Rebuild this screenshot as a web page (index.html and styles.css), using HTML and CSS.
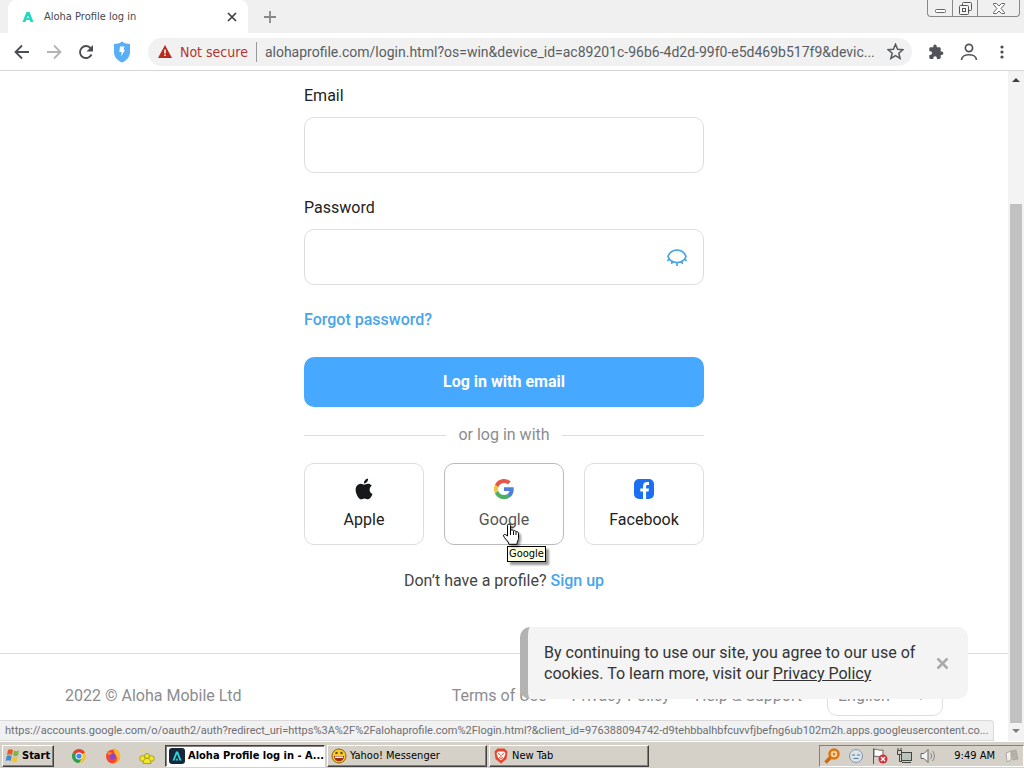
FILE: index.html
```html
<!DOCTYPE html>
<html lang="en">
<head>
    <meta charset="UTF-8">
    <meta name="viewport" content="width=device-width, initial-scale=1.0">
    <title>Aloha Profile log in</title>
    <link rel="stylesheet" href="styles.css">
</head>
<body>
    <header class="browser">
        <div class="tab-strip">
            <div class="tab">
                <svg class="tab-icon" width="12" height="12" viewBox="0 0 12 12"><path d="M0.500 11 L4.500 1 H7.500 L11.500 11 H8.500 L6 4.500 L3.500 11z" fill="#1fd8c0"/><path d="M3.500 9 L6 6.500 L8.500 9z" fill="#1fd8c0"/></svg>
                <span class="tab-title">Aloha Profile log in</span>
                <button class="icon-btn" aria-label="Close tab"><svg width="10" height="10" viewBox="0 0 10 10"><path d="M1 1l8 8M9 1l-8 8" stroke="#3c4043" stroke-width="1.700"/></svg></button>
            </div>
            <button class="icon-btn new-tab" aria-label="Open new tab"><svg width="12" height="12" viewBox="0 0 12 12"><path d="M6 0v12M0 6h12" stroke="#888" stroke-width="1.800"/></svg></button>
            <div class="window-buttons">
                <button class="win-btn" aria-label="Minimize"><svg width="13" height="12" viewBox="0 0 13 12"><rect x="1.500" y="7.500" width="10" height="3" rx="1" fill="#fff" stroke="#666"/></svg></button>
                <button class="win-btn" aria-label="Restore"><svg width="13" height="13" viewBox="0 0 13 13" fill="#f4f4f4" stroke="#555"><rect x="3.500" y="0.500" width="9" height="8" rx="1"/><rect x="0.500" y="3.500" width="9" height="9" rx="1"/><rect x="3.500" y="6.500" width="3" height="3"/></svg></button>
                <button class="win-btn win-close" aria-label="Close"><svg width="12" height="11" viewBox="0 0 12 11"><path d="M.5.5h3L6 3 8.500.5h3v1L8 5.500l3.500 4v1h-3L6 8l-2.500 2.500h-3v-1L4 5.500.5 1.500z" fill="#fff" stroke="#666"/></svg></button>
            </div>
        </div>
        <div class="toolbar">
            <button class="icon-btn" aria-label="Back"><svg width="16" height="16" viewBox="0 0 16 16"><path d="M15 8H2M8 1.500L1.500 8 8 14.500" fill="none" stroke="#4a4d51" stroke-width="1.800"/></svg></button>
            <button class="icon-btn" aria-label="Forward"><svg width="16" height="16" viewBox="0 0 16 16"><path d="M1 8h13M8 1.500L14.500 8 8 14.500" fill="none" stroke="#b4b4b4" stroke-width="1.800"/></svg></button>
            <button class="icon-btn" aria-label="Reload"><svg width="16" height="16" viewBox="0 0 16 16"><path d="M13.500 10.500a6 6 0 1 1-.8-6.200" fill="none" stroke="#4a4d51" stroke-width="1.900"/><path d="M15 1v6.500H8.500z" fill="#4a4d51"/></svg></button>
            <button class="icon-btn shield" aria-label="Shields"><svg width="18" height="22" viewBox="0 0 18 22"><path d="M9 0.500C6.500 2.300 4 3 1 3v8c0 5 3.500 8.500 8 10.500 4.500-2 8-5.500 8-10.500V3c-3 0-5.500-.7-8-2.500z" fill="#58aff5"/><path d="M7 5.500h4.500l-1 3.500H12l-4 6.500.8-4.500H6.300z" fill="#fff"/></svg></button>
            <div class="address">
                <svg width="14" height="13" viewBox="0 0 14 13"><path d="M7 0l7 13H0z" fill="#b72a20"/><path d="M7 4.500v4M7 9.500v1.500" stroke="#fff" stroke-width="1.500"/></svg>
                <span class="not-secure">Not secure</span>
                <input class="url" type="text" aria-label="Address" value="alohaprofile.com/login.html?os=win&amp;device_id=ac89201c-96b6-4d2d-99f0-e5d469b517f9&amp;devic...">
                <button class="icon-btn" aria-label="Bookmark"><svg width="17" height="17" viewBox="0 0 17 17"><path d="M8.500 1.300l2.100 5 5.200.4-4 3.500 1.300 5.200-4.600-2.800-4.600 2.800 1.300-5.200-4-3.500 5.200-.4z" fill="none" stroke="#56595d" stroke-width="1.500"/></svg></button>
            </div>
            <button class="icon-btn" aria-label="Extensions"><svg width="16" height="16" viewBox="0 0 16 16"><path d="M13.700 7.500h-1V4.700c0-.8-.6-1.400-1.400-1.400H8.700v-1a1.700 1.700 0 0 0-3.400 0v1H2.600c-.8 0-1.300.6-1.300 1.400v2.600h1a1.800 1.800 0 0 1 0 3.600h-1v2.700c0 .8.5 1.400 1.300 1.400h2.700v-1a1.800 1.800 0 0 1 3.600 0v1h2.400c.8 0 1.400-.6 1.400-1.400v-2.700h1a1.700 1.700 0 0 0 0-3.400z" fill="#505357"/></svg></button>
            <button class="icon-btn" aria-label="Profile"><svg width="18" height="18" viewBox="0 0 18 18"><g fill="none" stroke="#505357" stroke-width="1.700"><circle cx="9" cy="5" r="3.600"/><path d="M1.500 17c.5-7 14.500-7 15 0"/></g></svg></button>
            <button class="icon-btn" aria-label="Menu"><svg width="16" height="14" viewBox="0 0 16 14" fill="#4a4d51"><circle cx="8" cy="2" r="1.600"/><circle cx="8" cy="7" r="1.600"/><circle cx="8" cy="12" r="1.600"/></svg></button>
        </div>
    </header>

    <div class="viewport">
        <div class="page">
            <main class="content">
                <form class="login-form">
                    <label class="field-label" for="email">Email</label>
                    <div class="field"><input id="email" type="email"></div>
                    <label class="field-label" for="password">Password</label>
                    <div class="field">
                        <input id="password" type="password">
                        <button type="button" class="icon-btn" aria-label="Show password"><svg width="22" height="18" viewBox="0 0 22 18"><g fill="none" stroke="#4aa3e6" stroke-width="1.700"><path d="M2 8.500C5 0 17 0 20 8.500 17 16.500 5 16.500 2 8.500z"/><path d="M3.500 10.500l-2 2.500M6.500 13l-1 3M11 14v4M15.500 13l1 3M18.500 10.500l2 2.500"/></g></svg></button>
                    </div>
                    <a class="link forgot" href="#">Forgot password?</a>
                    <button type="button" class="submit">Log in with email</button>
                    <div class="divider">or log in with</div>
                    <div class="social">
                        <button type="button" class="social-btn">
                            <svg width="22" height="22" viewBox="2 2 20 20"><path fill="#15191b" d="M17.100 12.600c0-2.300 1.900-3.400 2-3.500-1.100-1.600-2.800-1.800-3.400-1.800-1.400-.2-2.800.8-3.500.8s-1.900-.8-3.100-.8c-1.600 0-3 .9-3.900 2.300-1.700 2.900-.4 7.100 1.200 9.400.8 1.200 1.700 2.400 3 2.400 1.200 0 1.600-.8 3.100-.8 1.400 0 1.800.8 3.100.8s2.100-1.200 2.900-2.300c.9-1.300 1.300-2.600 1.300-2.700-.1 0-2.700-1-2.700-3.800zM14.700 5.600c.7-.8 1.100-1.900 1-3.100-1 .1-2.100.7-2.800 1.500-.6.700-1.100 1.800-1 2.900 1.100.1 2.200-.5 2.800-1.300z"/></svg>
                            Apple
                        </button>
                        <button type="button" class="social-btn hovered">
                            <svg width="22" height="22" viewBox="0 0 24 24"><path fill="#4c7fe0" d="M22.600 12.300c0-.8-.1-1.500-.2-2.300H12v4.300h5.900c-.3 1.400-1 2.500-2.200 3.300v2.800h3.600c2.100-1.900 3.300-4.700 3.300-8.100z"/><path fill="#4caf63" d="M12 23c3 0 5.500-1 7.300-2.700l-3.600-2.800c-1 .7-2.200 1.100-3.700 1.100-2.900 0-5.300-1.900-6.200-4.500H2.200v2.800C4 20.500 7.700 23 12 23z"/><path fill="#f6c544" d="M5.800 14.100a6.600 6.600 0 0 1 0-4.200V7.100H2.200a11 11 0 0 0 0 9.800z"/><path fill="#e8564a" d="M12 5.400c1.600 0 3.100.6 4.200 1.600l3.200-3.100C17.500 2.100 15 1 12 1 7.700 1 4 3.500 2.200 7.100l3.600 2.800C6.700 7.300 9.100 5.400 12 5.400z"/></svg>
                            Google
                            <svg class="cursor" width="18" height="24" viewBox="0 0 18 24"><path d="M5.500 13V2.500a1.500 1.500 0 0 1 3 0V8c0-1.500 3-1.500 3 .5 0-1.500 2.500-1 2.500.8 0-1 2.500-.8 2.500 1v5c0 2-1.500 3-1.500 6H7c0-3-5-6-5.500-8.500-.3-1.300 1.500-2 2.500-.8z" fill="#fff" stroke="#000"/><path d="M8.500 8v4M11.500 8.500V12M14 9.500V12" stroke="#000"/></svg>
                            <span class="tooltip">Google</span>
                        </button>
                        <button type="button" class="social-btn">
                            <svg width="22" height="22" viewBox="0 0 22 22"><rect x="1" y="1" width="20" height="20" rx="5" fill="#1b6ff2"/><path d="M10 21v-7.500H7.300v-3H10V8.300c0-2.900 1.600-4.300 4-4.300h2v2.900h-1.200c-1.300 0-1.700.7-1.700 1.600v2H16l-.4 3h-2.500V21z" fill="#fff"/></svg>
                            Facebook
                        </button>
                    </div>
                    <p class="signup">Don’t have a profile? <a class="link" href="#">Sign up</a></p>
                </form>
            </main>
            <footer class="footer">
                <span>2022 © Aloha Mobile Ltd</span>
                <nav class="footer-links">
                    <a href="#">Terms of Use</a>
                    <a href="#">Privacy Policy</a>
                    <a href="#">Help &amp; Support</a>
                    <div class="language">
                        <select aria-label="Language"><option>English</option></select>
                        <svg width="10" height="10" viewBox="0 0 10 10"><path d="M1 4l4 4 4-4" fill="none" stroke="#8a8a8a" stroke-width="1.500"/></svg>
                    </div>
                </nav>
            </footer>
        </div>
        <div class="scrollbar">
            <svg width="16" height="16" viewBox="0 0 16 16"><path d="M4 11l4-4 4 4z" fill="#404040"/></svg>
            <div class="thumb"></div>
            <svg width="16" height="18" viewBox="0 0 16 18"><path d="M4 6l4 4 4-4z" fill="#808080"/></svg>
        </div>
        <aside class="cookies">
            <p>By continuing to use our site, you agree to our use of cookies. To learn more, visit our <a href="#">Privacy Policy</a></p>
            <button class="icon-btn" aria-label="Close"><svg width="13" height="13" viewBox="0 0 13 13"><path d="M1.500 1.500l10 10M11.500 1.500l-10 10" stroke="#aaa" stroke-width="2.500"/></svg></button>
        </aside>
        <div class="status">https://accounts.google.com/o/oauth2/auth?redirect_uri=https%3A%2F%2Falohaprofile.com%2Flogin.html?&amp;client_id=976388094742-d9tehbbalhbfcuvvfjbefng6ub102m2h.apps.googleusercontent.co...</div>
    </div>

    <footer class="taskbar">
        <button class="start">
            <svg width="16" height="16" viewBox="0 0 16 16"><path d="M3 2c2-1 3-1 5 0L7 7C5 6 4 6 2 7z" fill="#e2592a"/><path d="M9 2.500c2 1 3 1 5 0l-1 5c-2 1-3 1-5 0z" fill="#7ab843"/><path d="M1.700 8c2-1 3-1 5 0l-1 5c-2-1-3-1-5 0z" fill="#3e8dd0"/><path d="M7.700 8.500c2 1 3 1 5 0l-1 5c-2 1-3 1-5 0z" fill="#f4c432"/></svg>
            Start
        </button>
        <div class="quick-launch">
            <button class="icon-btn" aria-label="Chrome"><svg width="16" height="16" viewBox="0 0 16 16"><circle cx="8" cy="8" r="7" fill="#f4c531"/><path d="M8 8L2 4.400a7 7 0 0 1 12 0z" fill="#db4437"/><path d="M8 8L2 4.400A7 7 0 0 0 8 15l3-5z" fill="#2c9e58"/><circle cx="8" cy="8" r="3.500" fill="#fff"/><circle cx="8" cy="8" r="2.600" fill="#4285f4"/></svg></button>
            <button class="icon-btn" aria-label="Firefox"><svg width="16" height="16" viewBox="0 0 16 16"><circle cx="8" cy="8.500" r="7" fill="#f8452f"/><path d="M9 .5c5 1 6.500 4.500 6.200 8A7 7 0 0 1 8 15.500c4-2 5-5 3-8-1-2-3-4-2-7z" fill="#ffb52e"/><circle cx="7.500" cy="8.500" r="3" fill="#8a45c9"/><path d="M1.500 2.500c1 1.500 3 1.500 6 2.500L4 7.500z" fill="#ff8a2e"/></svg></button>
            <button class="icon-btn" aria-label="Messenger"><svg width="16" height="16" viewBox="0 0 16 16"><path d="M3 2l1.500 2M8 .5v2.500M13 2l-1.500 2" stroke="#f1dc4a"/><g fill="#f5e625" stroke="#97902a" stroke-width=".8"><circle cx="3.500" cy="10.500" r="2.800"/><circle cx="12.500" cy="10.500" r="2.800"/><path d="M4 15.500c0-7 8-7 8 0z"/><circle cx="8" cy="8" r="2.500"/></g></svg></button>
        </div>
        <button class="task active">
            <svg width="16" height="16" viewBox="0 0 16 16"><rect width="16" height="16" rx="3" fill="#17273a"/><path d="M3.500 12.500L7 3.500h2l3.500 9h-2L8 6l-2.500 6.500z" fill="#25d9dc"/><path d="M6.500 12.500L8 10l1.500 2.500z" fill="#25d9dc"/></svg>
            <span>Aloha Profile log in - A...</span>
        </button>
        <button class="task">
            <svg width="16" height="16" viewBox="0 0 16 16"><circle cx="8" cy="8" r="7" fill="#f8cc25" stroke="#8f6410"/><path d="M3 8h10c0 7-10 7-10 0z" fill="#a52b18"/><path d="M4 8.500h8v1.500H4z" fill="#fff"/><path d="M4.500 5.500l2-1M11.500 5.500l-2-1" stroke="#4a3208" stroke-width="1.400"/></svg>
            <span>Yahoo! Messenger</span>
        </button>
        <button class="task">
            <svg width="16" height="16" viewBox="0 0 16 16"><path d="M4.500.5h7L14.500 3.500l-1 7.500L8 15.500 2.500 11l-1-7.500z" fill="#e8452c"/><path d="M5 3.500h6l1.500 2-1.500 4-3 3-3-3-1.500-4z" fill="#fff"/><path d="M5 5.500l2 1M11 5.500l-2 1M8 6.500V9M6 9.500l2 1 2-1" stroke="#e8452c" fill="none"/></svg>
            <span>New Tab</span>
        </button>
        <div class="tray">
            <svg width="16" height="16" viewBox="0 0 16 16"><path d="M1.500 14.500L7 9" stroke="#cf6a0a" stroke-width="3.500"/><circle cx="10" cy="6" r="4.500" fill="#f4d3a5" stroke="#df7510" stroke-width="2.500"/><circle cx="10" cy="6" r="1.200" fill="#df7510"/></svg>
            <svg width="16" height="16" viewBox="0 0 16 16"><circle cx="8" cy="8" r="6.500" fill="#d9e4ec" stroke="#8498a8"/><path d="M4 7h3M9 7h3M5.500 10.500h5" stroke="#5d7488" fill="none"/></svg>
            <svg width="16" height="16" viewBox="0 0 16 16"><path d="M1.500 16V.5" stroke="#555"/><path d="M2 1.500c3-1 4 1.500 9 .5v6.500c-4 1-6-1-9 0z" fill="#fff" stroke="#666"/><circle cx="11" cy="11" r="4.500" fill="#d0333a"/><path d="M9 9l4 4M13 9l-4 4" stroke="#fff" stroke-width="1.400"/></svg>
            <svg width="16" height="16" viewBox="0 0 16 16"><rect x="5.500" y="4.500" width="10" height="8" fill="#b9c5b9" stroke="#444"/><path d="M6 14.500h9M1.500 2.500h4v4h-4zM3.500 7v6.500H6M2 0v2M5 0v2" fill="none" stroke="#444"/></svg>
            <svg width="18" height="16" viewBox="0 0 18 16"><path d="M1 5.500h3L8 1.500v13l-4-4H1z" fill="#f3f3f3" stroke="#666"/><path d="M10.500 5c1.500 2 1.500 4 0 6M12.500 3c2.500 3 2.500 7 0 10" fill="none" stroke="#888"/></svg>
            <time class="clock">9:49 AM</time>
            <svg width="14" height="14" viewBox="0 0 14 14"><path d="M1 4l5-2v9l-4 2z" fill="#f3f0e5" stroke="#aaa"/><path d="M6 2l5-1 2 9-5 1z" fill="#b7b2a3" stroke="#aaa"/></svg>
        </div>
    </footer>
</body>
</html>
```

FILE: styles.css
```css
* {
    margin: 0;
    padding: 0;
    box-sizing: border-box;
}

body {
    display: flex;
    flex-direction: column;
    height: 100vh;
    overflow: hidden;
    font-family: Roboto, sans-serif;
    font-size: 16px;
    line-height: 20px;
    color: #222;
    background: #fff;
}

button, input, select {
    font: inherit;
    color: inherit;
}

svg {
    display: block;
    flex-shrink: 0;
}

.icon-btn {
    display: flex;
    align-items: center;
    justify-content: center;
    border: none;
    background: none;
    flex-shrink: 0;
}

/* Browser chrome */
.browser {
    font-family: "DejaVu Sans Condensed", "Noto Sans", sans-serif;
    border-bottom: 1px solid #d6d6d6;
}

.tab-strip {
    display: flex;
    align-items: flex-start;
    height: 33px;
    padding-left: 8px;
    background: #f0f0f1;
}

.tab {
    display: flex;
    align-items: center;
    width: 240px;
    height: 33px;
    padding: 0 11px 0 14px;
    gap: 10px;
    border-radius: 8px 8px 0 0;
    background: #fff;
}

.tab-title {
    flex: 1;
    font-size: 11px;
    color: #45484c;
}

.new-tab {
    width: 44px;
    height: 33px;
}

.window-buttons {
    display: flex;
    margin-left: auto;
    margin-right: 4px;
    border: 1px solid #888;
    border-top: none;
    border-radius: 0 0 4px 4px;
}

.win-btn {
    display: flex;
    align-items: center;
    justify-content: center;
    width: 25px;
    height: 16px;
    border: none;
    border-right: 1px solid #888;
    background: none;
}

.win-close {
    width: 41px;
    border-right: none;
}

.toolbar {
    display: flex;
    align-items: center;
    height: 37px;
    padding: 0 14px;
    gap: 16px;
}

.shield {
    margin: 0 1px 0 3px;
}

.address {
    display: flex;
    flex: 1;
    align-items: center;
    height: 28px;
    padding: 0 8px 0 10px;
    gap: 8px;
    border-radius: 14px;
    background: #f1f1f2;
    font-size: 14px;
}

.not-secure {
    padding-right: 8px;
    border-right: 1px solid #999;
    color: #b3352e;
    white-space: nowrap;
}

.url {
    flex: 1;
    min-width: 0;
    border: none;
    background: none;
    color: #5a5d61;
    font-family: Roboto, sans-serif;
}

/* Web page */
.viewport {
    position: relative;
    display: flex;
    flex: 1;
    min-height: 0;
}

.page {
    display: flex;
    flex: 1;
    flex-direction: column;
    overflow: hidden;
}

.content {
    padding: 15px 24px 62px;
}

.login-form {
    display: flex;
    flex-direction: column;
    max-width: 400px;
    margin: 0 auto;
}

.field {
    display: flex;
    height: 56px;
    margin: 11px 0 25px;
    padding: 0 15px;
    border: 1px solid #dedede;
    border-radius: 10px;
}

.field input {
    flex: 1;
    min-width: 0;
    border: none;
    outline: none;
    background: none;
}

.link {
    color: #4aa5e8;
    font-weight: 500;
    text-decoration: none;
}

.forgot {
    align-self: flex-start;
}

.submit {
    height: 50px;
    margin: 27px 0 18px;
    border: none;
    border-radius: 10px;
    background: #46a9ff;
    color: #fff;
    font-weight: 700;
}

.divider {
    display: flex;
    align-items: center;
    gap: 12px;
    color: #8c8c8f;
}

.divider::before, .divider::after {
    content: "";
    flex: 1;
    height: 1px;
    background: #dedede;
}

.social {
    display: grid;
    grid-template-columns: repeat(3, 1fr);
    gap: 20px;
    margin: 18px 0 26px;
}

.social-btn {
    position: relative;
    display: flex;
    flex-direction: column;
    align-items: center;
    justify-content: center;
    gap: 10px;
    height: 82px;
    border: 1px solid #dedede;
    border-radius: 10px;
    background: #fff;
}

.hovered {
    border-color: #bbb;
    color: #555;
}

.cursor {
    position: absolute;
    left: 57px;
    top: 59px;
    z-index: 2;
    filter: drop-shadow(2px 2px 1px rgba(0, 0, 0, 0.4));
}

.tooltip {
    position: absolute;
    left: 62px;
    top: 82px;
    z-index: 1;
    padding: 0 1px;
    border: 1px solid #000;
    background: #ffffe1;
    box-shadow: 3px 3px 2px rgba(0, 0, 0, 0.4);
    color: #000;
    font-family: "DejaVu Sans Condensed", "Noto Sans", sans-serif;
    font-size: 11px;
    line-height: 14px;
}

.signup {
    text-align: center;
    color: #444;
}

.footer {
    display: flex;
    align-items: center;
    justify-content: space-between;
    padding: 22px 65px;
    border-top: 1px solid #dcdcdc;
    color: #8c8c8f;
}

.footer a {
    color: inherit;
    text-decoration: none;
}

.footer-links {
    display: flex;
    align-items: center;
    gap: 25px;
}

.language {
    display: flex;
    align-items: center;
    width: 116px;
    height: 40px;
    padding: 0 16px 0 10px;
    border: 1px solid #dedede;
    border-radius: 10px;
}

.language select {
    flex: 1;
    appearance: none;
    border: none;
    background: none;
}

.scrollbar {
    display: flex;
    flex-direction: column;
    width: 16px;
    background: #f3f3f3;
}

.thumb {
    flex: 1;
    margin: 117px 2px 0;
    background: #c1c1c1;
}

.cookies {
    position: absolute;
    right: 56px;
    bottom: 42px;
    display: flex;
    align-items: center;
    width: 448px;
    padding: 15px 19px 15px 16px;
    border-left: 8px solid #b3b3b3;
    border-radius: 10px;
    background: #f4f4f4;
    color: #333;
    line-height: 21px;
}

.cookies p {
    flex: 1;
}

.cookies a {
    color: inherit;
}

.status {
    position: absolute;
    left: 0;
    bottom: 0;
    width: 994px;
    height: 21px;
    padding: 0 5px;
    overflow: hidden;
    border: 1px solid #dadada;
    border-left: none;
    border-radius: 0 4px 0 0;
    background: #f1f1f2;
    color: #6d6f72;
    font-family: Roboto, sans-serif;
    font-size: 11px;
    line-height: 19px;
    white-space: nowrap;
}

/* Taskbar */
.taskbar {
    display: flex;
    align-items: center;
    height: 27px;
    padding: 2px 0 1px 2px;
    gap: 2px;
    border-top: 1px solid #fff;
    background: #d5d0c8;
    color: #000;
    font-family: "DejaVu Sans Condensed", "Noto Sans", sans-serif;
    font-size: 11px;
}

.start, .task {
    display: flex;
    align-items: center;
    height: 22px;
    padding: 0 3px;
    gap: 3px;
    border: 1px solid;
    border-color: #fff #404040 #404040 #fff;
    box-shadow: inset -1px -1px #808080;
    background: #d5d0c8;
    white-space: nowrap;
}

.start {
    width: 52px;
    padding: 0 2px;
    gap: 1px;
    font-weight: 700;
}

.quick-launch {
    display: flex;
    width: 107px;
    padding-left: 15px;
    gap: 18px;
}

.task {
    width: 160px;
}

.task.active {
    border-color: #404040 #fff #fff #404040;
    box-shadow: inset 1px 1px #808080;
    background: #fff;
    font-weight: 700;
}

.tray {
    display: flex;
    align-items: center;
    height: 22px;
    margin-left: auto;
    padding: 0 4px;
    gap: 8px;
    border: 1px solid;
    border-color: #808080 #fff #fff #808080;
}

.clock {
    padding: 0 2px 0 8px;
}
```
